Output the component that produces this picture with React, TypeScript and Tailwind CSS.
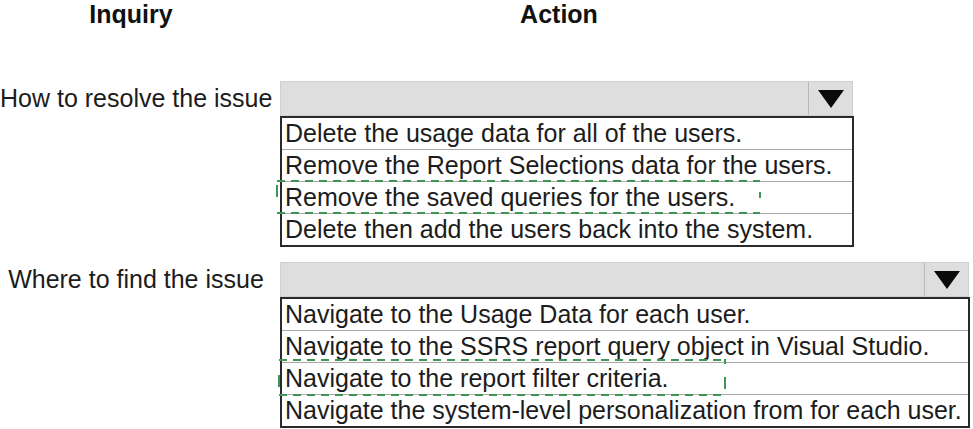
import React from "react";

interface IQuestion {
  label: string;
  boxWidth: number;
  options: string[];
  picked: number;
  mark: {
    left: number;
    width: number;
    top: number;
    height: number;
    leftTick: [number, number];
    rightTick: [number, number];
    corner?: boolean;
  };
}

const questions: IQuestion[] = [
  {
    label: "How to resolve the issue",
    boxWidth: 574,
    options: [
      "Delete the usage data for all of the users.",
      "Remove the Report Selections data for the users.",
      "Remove the saved queries for the users.",
      "Delete then add the users back into the system.",
    ],
    picked: 2,
    mark: { left: -6, width: 484, top: -2, height: 33, leftTick: [5, 17], rightTick: [12, 18] },
  },
  {
    label: "Where to find the issue",
    boxWidth: 690,
    options: [
      "Navigate to the Usage Data for each user.",
      "Navigate to the SSRS report query object in Visual Studio.",
      "Navigate to the report filter criteria.",
      "Navigate the system-level personalization from for each user.",
    ],
    picked: 2,
    mark: { left: -4, width: 447, top: -4, height: 36, leftTick: [16, 28], rightTick: [18, 30], corner: true },
  },
];

function Arrow() {
  return (
    <svg width="26" height="18" viewBox="0 0 26 18">
      <polygon points="0,0 26,0 13,18" fill="#0a0a0a" />
    </svg>
  );
}

// dashed green box laid over the picked answer
function Mark({ m }: { m: IQuestion["mark"] }) {
  const c = "#3f9558";
  return (
    <svg
      className="absolute pointer-events-none"
      style={{ left: m.left, top: m.top }}
      width={m.width + 2}
      height={m.height + 2}
    >
      <line x1="1" y1="1" x2={m.width} y2="1" stroke={c} strokeWidth="2" strokeDasharray="8 6" />
      <line x1="1" y1={m.height} x2={m.width} y2={m.height} stroke={c} strokeWidth="2" strokeDasharray="8 6" />
      <line x1="1" y1={m.leftTick[0]} x2="1" y2={m.leftTick[1]} stroke={c} strokeWidth="2" />
      <line x1={m.width} y1={m.rightTick[0]} x2={m.width} y2={m.rightTick[1]} stroke={c} strokeWidth="2" />
      {m.corner && <line x1={m.width} y1="0" x2={m.width} y2="5" stroke={c} strokeWidth="2" />}
    </svg>
  );
}

function Question({ q }: { q: IQuestion }) {
  return (
    <div className="flex items-start">
      <div className="w-[272px] h-[34px] leading-[34px] text-center text-[25px] text-[#1c1c1c] whitespace-nowrap">
        {q.label}
      </div>
      <div className="ml-[8px] flex flex-col">
        {/* closed select */}
        <div
          className="h-[35px] flex justify-end bg-[#dedede] border border-[#cfcfcf]"
          style={{ width: q.boxWidth - 1 }}
        >
          <div className="w-[44px] h-full flex items-center justify-center border-l border-[#b8b8b8]">
            <Arrow />
          </div>
        </div>
        {/* option list */}
        <div className="border-2 border-[#2a2a2a] bg-white" style={{ width: q.boxWidth }}>
          {q.options.map((o, i) => (
            <div
              key={o}
              className={`relative h-[31px] leading-[31px] pl-[3px] text-[25px] text-[#1c1c1c] whitespace-nowrap ${
                i < q.options.length - 1 ? "box-content border-b border-[#a8a8a8]" : ""
              }`}
            >
              {o}
              {i === q.picked && <Mark m={q.mark} />}
            </div>
          ))}
        </div>
      </div>
    </div>
  );
}

export default function App() {
  return (
    <div className="w-[973px] h-[429px] overflow-hidden bg-white font-['Liberation_Sans',Arial,sans-serif]">
      <div className="flex h-[28px] leading-[28px] text-[25px] font-bold text-[#111]">
        <div className="w-[262px] text-center">Inquiry</div>
        <div className="w-[594px] text-center">Action</div>
      </div>
      <div className="mt-[53px] flex flex-col gap-[15px]">
        {questions.map((q) => (
          <Question key={q.label} q={q} />
        ))}
      </div>
    </div>
  );
}
